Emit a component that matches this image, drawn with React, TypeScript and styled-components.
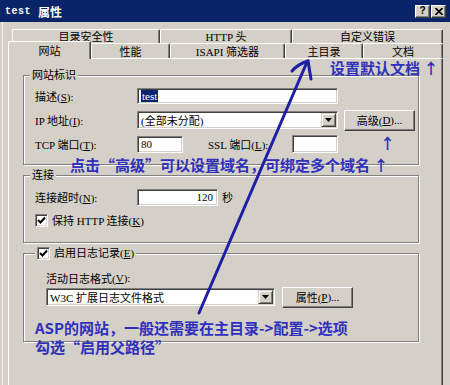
import styled, { createGlobalStyle } from "styled-components";

const GlobalStyle = createGlobalStyle`
  * { box-sizing: border-box; }
  html, body { margin: 0; padding: 0; background: #d4d0c8; }
  body {
    font-family: "Liberation Serif", "Noto Sans CJK SC", serif;
    font-size: 11px;
    color: #000;
  }
  u { text-decoration: underline; text-underline-offset: 1px; }
`;

const Window = styled.div`
  position: relative;
  width: 450px;
  height: 385px;
  overflow: hidden;
  background: #d4d0c8;
  box-shadow: inset 2px 0 #d4d0c8, inset 3px 0 #f4f3f0;
`;

const TitleBar = styled.div`
  height: 22px;
  background: #0a246a;
  display: flex;
  align-items: center;
  justify-content: space-between;
  padding: 0 4px 0 5px;
`;

const Title = styled.div`
  display: flex;
  align-items: center;
  gap: 7px;
  color: #fff;
  font-family: "Noto Sans CJK SC", sans-serif;
  font-weight: 700;
  font-size: 12px;
  span {
    font-family: "Liberation Mono", monospace;
    font-size: 10px;
    letter-spacing: 0.5px;
  }
`;

const CaptionButtons = styled.div`
  display: flex;
  gap: 1px;
`;

const CaptionButton = styled.div`
  width: 15px;
  height: 13px;
  background: #d4d0c8;
  border-top: 1px solid #fff;
  border-left: 1px solid #fff;
  border-right: 1px solid #404040;
  border-bottom: 1px solid #404040;
  box-shadow: inset -1px -1px #808080;
  display: flex;
  align-items: center;
  justify-content: center;
  font: 700 10px "Liberation Sans", sans-serif;
  line-height: 1;
`;

const Body = styled.div`
  padding: 7px 0 0 8px;
`;

const TabRow = styled.div<{ $indent: number; $h: number }>`
  display: flex;
  align-items: flex-end;
  height: ${p => p.$h}px;
  margin-left: ${p => p.$indent}px;
`;

const Tab = styled.div<{ $w: number; $active?: boolean }>`
  position: relative;
  z-index: ${p => (p.$active ? 1 : 0)};
  width: ${p => p.$w}px;
  height: ${p => (p.$active ? "18px" : "100%")};
  margin-bottom: ${p => (p.$active ? "-1px" : "0")};
  background: #d4d0c8;
  display: flex;
  align-items: center;
  justify-content: center;
  line-height: 12px;
  border-top: 1px solid #fff;
  border-left: 1px solid #fff;
  border-right: 1px solid #404040;
  box-shadow: inset -1px 0 #808080;
  border-radius: 2px 2px 0 0;
  white-space: nowrap;
  padding-top: ${p => (p.$active ? "0" : "1px")};
`;

const Panel = styled.div`
  width: 435px;
  height: 340px;
  border-top: 1px solid #fff;
  border-left: 1px solid #fff;
  border-right: 1px solid #404040;
  box-shadow: inset -1px 0 #808080;
  padding: 9px 23px 0 14px;
  display: flex;
  flex-direction: column;
  gap: 3px;
`;

const Group = styled.fieldset<{ $pt: number; $pb: number; $pl?: number }>`
  margin: 0;
  min-width: 0;
  padding: ${p => p.$pt}px 12px ${p => p.$pb}px ${p => p.$pl ?? 11}px;
  border: 1px solid #808080;
  box-shadow: inset 1px 1px #fff, 1px 1px #fff;
`;

const Legend = styled.legend<{ $x: number }>`
  margin-left: ${p => p.$x}px;
  padding: 0 2px;
  line-height: 14px;
  height: 14px;
  background: #d4d0c8;
  display: flex;
  align-items: center;
  gap: 4px;
  white-space: nowrap;
`;

const Stack = styled.div<{ $gap: number }>`
  display: flex;
  flex-direction: column;
  gap: ${p => p.$gap}px;
`;

const Row = styled.div<{ $h?: number }>`
  display: flex;
  align-items: center;
  height: ${p => p.$h ?? 22}px;
  white-space: nowrap;
`;

const Label = styled.span<{ $w?: number; $ml?: number }>`
  flex: none;
  width: ${p => (p.$w ? `${p.$w}px` : "auto")};
  margin-left: ${p => p.$ml ?? 0}px;
`;

const TextBox = styled.div<{ $w: number; $h: number; $right?: boolean }>`
  flex: none;
  width: ${p => p.$w}px;
  height: ${p => p.$h}px;
  background: #fff;
  border-top: 1px solid #808080;
  border-left: 1px solid #808080;
  border-bottom: 1px solid #fff;
  border-right: 1px solid #fff;
  box-shadow: inset 1px 1px #404040, inset -1px -1px #d4d0c8;
  display: flex;
  align-items: center;
  justify-content: ${p => (p.$right ? "flex-end" : "flex-start")};
  padding: 0 4px 0 3px;
`;

const Selected = styled.span`
  background: #0a246a;
  color: #fff;
  padding: 0 1px;
  line-height: 12px;
`;

const SelectBox = styled(TextBox)`
  padding-right: 1px;
  justify-content: space-between;
`;

const DropButton = styled.div`
  width: 15px;
  height: 14px;
  background: #d4d0c8;
  border-top: 1px solid #d4d0c8;
  border-left: 1px solid #d4d0c8;
  border-right: 1px solid #404040;
  border-bottom: 1px solid #404040;
  box-shadow: inset 1px 1px #fff, inset -1px -1px #808080;
  display: flex;
  align-items: center;
  justify-content: center;
`;

const Button = styled.div<{ $w: number; $ml: number }>`
  flex: none;
  width: ${p => p.$w}px;
  height: 21px;
  margin-left: ${p => p.$ml}px;
  background: #d4d0c8;
  border-top: 1px solid #fff;
  border-left: 1px solid #fff;
  border-right: 1px solid #404040;
  border-bottom: 1px solid #404040;
  box-shadow: inset -1px -1px #808080;
  display: flex;
  align-items: center;
  justify-content: center;
`;

const Check = styled.div`
  flex: none;
  width: 13px;
  height: 13px;
  background: #fff;
  border-top: 1px solid #808080;
  border-left: 1px solid #808080;
  border-bottom: 1px solid #fff;
  border-right: 1px solid #fff;
  box-shadow: inset 1px 1px #404040, inset -1px -1px #d4d0c8;
  display: flex;
  align-items: center;
  justify-content: center;
`;

const CheckRow = styled(Row)`
  gap: 4px;
`;

const Note = styled.div<{ $x: number; $y: number }>`
  position: absolute;
  left: ${p => p.$x}px;
  top: ${p => p.$y}px;
  font-family: "Noto Sans CJK SC", "Liberation Sans", sans-serif;
  font-weight: 700;
  font-size: 15px;
  line-height: 19px;
  color: #3030bc;
  white-space: pre;
`;

const Overlay = styled.svg`
  position: absolute;
  inset: 0;
  pointer-events: none;
`;

function DropArrow() {
  return (
    <DropButton>
      <svg width="7" height="4" viewBox="0 0 7 4">
        <polygon points="0,0 7,0 3.5,4" fill="#000" />
      </svg>
    </DropButton>
  );
}

function CheckBox() {
  return (
    <Check>
      <svg width="9" height="9" viewBox="0 0 9 9">
        <path d="M1 4 L3.5 6.5 L8 1.5" stroke="#000" strokeWidth="2" fill="none" />
      </svg>
    </Check>
  );
}

export default function App() {
  return (
    <Window>
      <GlobalStyle />
      <TitleBar>
        <Title>
          <span>test</span>属性
        </Title>
        <CaptionButtons>
          <CaptionButton>?</CaptionButton>
          <CaptionButton>
            <svg width="8" height="7" viewBox="0 0 8 7">
              <path d="M0.5 0 L7.5 7 M7.5 0 L0.5 7" stroke="#000" strokeWidth="1.6" />
            </svg>
          </CaptionButton>
        </CaptionButtons>
      </TitleBar>

      <Body>
        <TabRow $indent={4} $h={14}>
          <Tab $w={148}>目录安全性</Tab>
          <Tab $w={132}>HTTP 头</Tab>
          <Tab $w={151}>自定义错误</Tab>
        </TabRow>
        <TabRow $indent={0} $h={15}>
          <Tab $w={83} $active>网站</Tab>
          <Tab $w={79}>性能</Tab>
          <Tab $w={115}>ISAPI 筛选器</Tab>
          <Tab $w={78}>主目录</Tab>
          <Tab $w={80}>文档</Tab>
        </TabRow>

        <Panel>
          <Group $pt={3} $pb={9}>
            <Legend $x={-5}>网站标识</Legend>
            <Stack $gap={2}>
              <Row>
                <Label $w={102}>描述(<u>S</u>):</Label>
                <TextBox $w={201} $h={16}>
                  <Selected>test</Selected>
                </TextBox>
              </Row>
              <Row>
                <Label $w={102}>IP 地址(<u>I</u>):</Label>
                <SelectBox $w={201} $h={18}>
                  <span>(全部未分配)</span>
                  <DropArrow />
                </SelectBox>
                <Button $w={71} $ml={6}>高级(<u>D</u>)...</Button>
              </Row>
              <Row>
                <Label $w={102}>TCP 端口(<u>T</u>):</Label>
                <TextBox $w={46} $h={17}>80</TextBox>
                <Label $w={84} $ml={25}>SSL 端口(<u>L</u>):</Label>
                <TextBox $w={46} $h={18} />
              </Row>
            </Stack>
          </Group>

          <Group $pt={4} $pb={11}>
            <Legend $x={-5}>连接</Legend>
            <Stack $gap={1}>
              <Row>
                <Label $w={102}>连接超时(<u>N</u>):</Label>
                <TextBox $w={81} $h={17} $right>120</TextBox>
                <Label $ml={4}>秒</Label>
              </Row>
              <CheckRow>
                <CheckBox />
                <span>保持 HTTP 连接(<u>K</u>)</span>
              </CheckRow>
            </Stack>
          </Group>

          <Group $pt={11} $pb={33} $pl={22}>
            <Legend $x={-11}>
              <CheckBox />
              <span>启用日志记录(<u>E</u>)</span>
            </Legend>
            <Stack $gap={1}>
              <Row $h={14}>活动日志格式(<u>V</u>):</Row>
              <Row>
                <SelectBox $w={229} $h={18}>
                  <span>W3C 扩展日志文件格式</span>
                  <DropArrow />
                </SelectBox>
                <Button $w={71} $ml={7}>属性(<u>P</u>)...</Button>
              </Row>
            </Stack>
          </Group>
        </Panel>
      </Body>

      <Note $x={330} $y={58}>设置默认文档 ↑</Note>
      <Note $x={380} $y={133}>↑</Note>
      <Note $x={70} $y={155}>点击“高级”可以设置域名，可绑定多个域名 ↑</Note>
      <Note $x={35} $y={318}>{"ASP的网站，一般还需要在主目录->配置->选项\n勾选“启用父路径”"}</Note>

      <Overlay width="450" height="385" viewBox="0 0 450 385">
        <g stroke="#1e1ea6" strokeWidth="3" strokeLinecap="round" fill="none">
          <path d="M199 313 L307 62" />
          <path d="M292 71 Q298 64 308 61" />
          <path d="M308 61 L311 79" />
        </g>
      </Overlay>
    </Window>
  );
}
